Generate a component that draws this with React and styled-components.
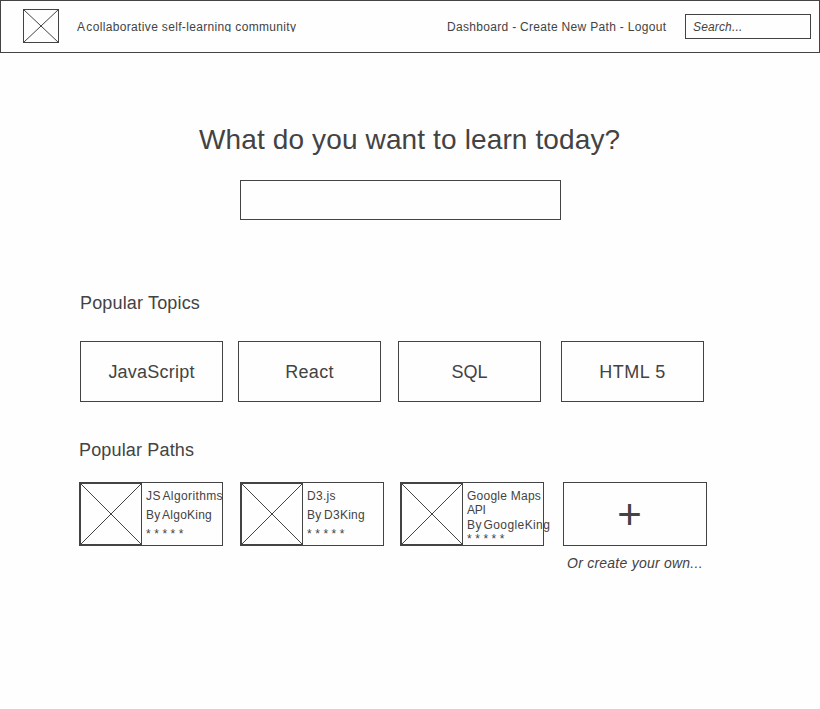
import React from 'react';
import styled, { createGlobalStyle } from 'styled-components';

const ink = '#434343';

const GlobalStyle = createGlobalStyle`
  * { box-sizing: border-box; }
  body {
    margin: 0;
    background: #fefefe;
    color: ${ink};
    font-family: "Liberation Sans", Arial, sans-serif;
  }
`;

const Page = styled.div`
  min-height: 709px;
  overflow: hidden;
`;

const Header = styled.header`
  display: flex;
  height: 53px;
  padding: 8px 8px 0 22px;
  border: 1px solid ${ink};
`;

const Picture = styled.svg`
  display: block;
  flex: none;
  width: ${p => p.$w}px;
  height: ${p => p.$h}px;
  stroke: ${ink};
  stroke-width: 1;
  fill: none;
`;

const Tagline = styled.div`
  height: 13px;
  margin: 10px 0 0 18px;
  overflow: hidden;
  font-size: 12px;
  line-height: 16px;
  letter-spacing: 0.34px;
  white-space: nowrap;
`;

const Tight = styled.span`
  word-spacing: ${p => p.$by || -2}px;
`;

const Nav = styled.nav`
  width: 220px;
  margin: 10px 18px 0 auto;
  font-size: 12px;
  line-height: 16px;
  letter-spacing: 0.31px;
  white-space: nowrap;
`;

const SearchBox = styled.div`
  width: 126px;
  height: 25px;
  margin-top: 5px;
  padding-left: 7px;
  border: 1px solid ${ink};
  font-size: 12px;
  font-style: italic;
  line-height: 24px;
  letter-spacing: 0.15px;
`;

const Hero = styled.section`
  display: flex;
  flex-direction: column;
  align-items: flex-start;
  padding: 71px 0 0 199px;
`;

const Title = styled.h1`
  margin: 0;
  font-size: 28px;
  font-weight: 400;
  line-height: 32px;
  letter-spacing: 0.13px;
  white-space: nowrap;
`;

const MainInput = styled.div`
  width: 321px;
  height: 40px;
  margin: 24px 0 0 41px;
  border: 1px solid ${ink};
`;

const SectionTitle = styled.h2`
  margin: ${p => p.$top}px 0 0 ${p => p.$left}px;
  font-size: 18px;
  font-weight: 400;
  line-height: 20px;
  letter-spacing: 0.16px;
`;

const Topics = styled.div`
  display: grid;
  grid-template-columns: 158px 160px 163px 143px;
  margin: 28px 0 0 80px;
`;

const Topic = styled.div`
  width: 143px;
  height: 61px;
  border: 1px solid ${ink};
  font-size: 18px;
  line-height: 60px;
  letter-spacing: ${p => p.$track}px;
  text-align: center;
`;

const Paths = styled.div`
  display: grid;
  grid-template-columns: 161px 160px 163px 144px;
  margin: 22px 0 0 79px;
`;

const Card = styled.div`
  display: flex;
  width: 144px;
  height: 64px;
  border: 1px solid ${ink};
`;

const Details = styled.div`
  padding: ${p => (p.$compact ? 6 : 4)}px 0 0 4px;
  font-size: 12px;
  line-height: ${p => (p.$compact ? 14.4 : 19)}px;
  white-space: nowrap;
`;

const Line = styled.div`
  letter-spacing: ${p => p.$track}px;
`;

const Stars = styled(Line)`
  letter-spacing: 0.1px;
`;

const AddCard = styled(Card)`
  justify-content: center;
  padding-right: 11px;
  font-size: 42px;
  line-height: 63px;
`;

const Caption = styled.div`
  margin: 9px 0 0 4px;
  font-size: 14px;
  font-style: italic;
  line-height: 16px;
  letter-spacing: 0.24px;
  white-space: nowrap;
`;

function Placeholder({ w, h }) {
  return (
    <Picture $w={w} $h={h} viewBox={`0 0 ${w} ${h}`}>
      <rect x="0.5" y="0.5" width={w - 1} height={h - 1} />
      <path d={`M0.5 0.5L${w - 0.5} ${h - 0.5}M${w - 0.5} 0.5L0.5 ${h - 0.5}`} />
    </Picture>
  );
}

export default function App() {
  return (
    <Page>
      <GlobalStyle />
      <Header>
        <Placeholder w={36} h={34} />
        <Tagline><Tight>A </Tight>collaborative self-learning community</Tagline>
        <Nav>Dashboard - Create New Path - Logout</Nav>
        <SearchBox>Search...</SearchBox>
      </Header>
      <Hero>
        <Title>What do you want to learn today?</Title>
        <MainInput />
      </Hero>
      <SectionTitle $top={73} $left={80}>Popular Topics</SectionTitle>
      <Topics>
        <Topic $track={0.22}>JavaScript</Topic>
        <Topic $track={0.25}>React</Topic>
        <Topic $track={0}>SQL</Topic>
        <Topic $track={0.5}>HTML 5</Topic>
      </Topics>
      <SectionTitle $top={38} $left={79}>Popular Paths</SectionTitle>
      <Paths>
        <Card>
          <Placeholder w={62} h={62} />
          <Details>
            <Line $track={0.38}><Tight>JS </Tight>Algorithms</Line>
            <Line $track={0.24}><Tight>By </Tight>AlgoKing</Line>
            <Stars>* * * * *</Stars>
          </Details>
        </Card>
        <Card>
          <Placeholder w={62} h={62} />
          <Details>
            <Line $track={0.3}>D3.js</Line>
            <Line $track={0.25}><Tight $by={-1}>By </Tight>D3King</Line>
            <Stars>* * * * *</Stars>
          </Details>
        </Card>
        <Card>
          <Placeholder w={62} h={62} />
          <Details $compact>
            <Line $track={0.25}>Google Maps</Line>
            <Line $track={-0.3}>API</Line>
            <Line $track={0.4}><Tight>By </Tight>GoogleKing</Line>
            <Stars>* * * * *</Stars>
          </Details>
        </Card>
        <div>
          <AddCard>+</AddCard>
          <Caption>Or create your own...</Caption>
        </div>
      </Paths>
    </Page>
  );
}
